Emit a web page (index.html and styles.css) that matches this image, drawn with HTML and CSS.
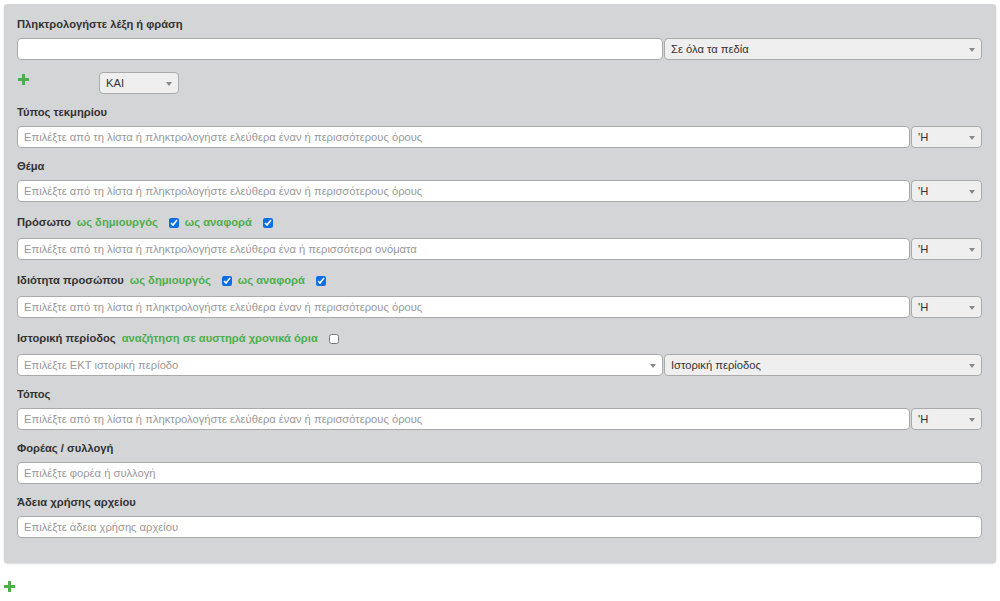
FILE: index.html
```html
<!DOCTYPE html>
<html>
<head lang="el">
    <meta charset="UTF-8">
    <title>Σύνθετη αναζήτηση</title>
    <link rel="stylesheet" href="styles.css">
</head>
<body>

<div class="search-panel">
    <div class="field">
        <div class="label">Πληκτρολογήστε λέξη ή φράση</div>
        <div class="row">
            <input class="text-input grow" type="text">
            <div class="select wide"><span>Σε όλα τα πεδία</span><i class="arrow"></i></div>
        </div>
    </div>

    <div class="op-row">
        <span class="plus">
            <svg width="11" height="11" viewBox="0 0 11 11"><path d="M4 0h3v4h4v3H7v4H4V7H0V4h4z" fill="#4cae4c"/></svg>
        </span>
        <div class="select op"><span>ΚΑΙ</span><i class="arrow"></i></div>
    </div>

    <div class="field">
        <div class="label">Τύπος τεκμηρίου</div>
        <div class="row">
            <div class="text-input grow placeholder">Επιλέξτε από τη λίστα ή πληκτρολογήστε ελεύθερα έναν ή περισσότερους όρους</div>
            <div class="select small"><span>'Η</span><i class="arrow"></i></div>
        </div>
    </div>

    <div class="field">
        <div class="label">Θέμα</div>
        <div class="row">
            <div class="text-input grow placeholder">Επιλέξτε από τη λίστα ή πληκτρολογήστε ελεύθερα έναν ή περισσότερους όρους</div>
            <div class="select small"><span>'Η</span><i class="arrow"></i></div>
        </div>
    </div>

    <div class="field">
        <div class="label tall">Πρόσωπο
            <span class="opt">ως δημιουργός</span><input type="checkbox" checked>
            <span class="opt">ως αναφορά</span><input type="checkbox" checked>
        </div>
        <div class="row">
            <div class="text-input grow placeholder">Επιλέξτε από τη λίστα ή πληκτρολογήστε ελεύθερα ένα ή περισσότερα ονόματα</div>
            <div class="select small"><span>'Η</span><i class="arrow"></i></div>
        </div>
    </div>

    <div class="field">
        <div class="label tall">Ιδιότητα προσώπου
            <span class="opt">ως δημιουργός</span><input type="checkbox" checked>
            <span class="opt">ως αναφορά</span><input type="checkbox" checked>
        </div>
        <div class="row">
            <div class="text-input grow placeholder">Επιλέξτε από τη λίστα ή πληκτρολογήστε ελεύθερα έναν ή περισσότερους όρους</div>
            <div class="select small"><span>'Η</span><i class="arrow"></i></div>
        </div>
    </div>

    <div class="field">
        <div class="label tall">Ιστορική περίοδος
            <span class="opt">αναζήτηση σε αυστηρά χρονικά όρια</span><input type="checkbox">
        </div>
        <div class="row">
            <div class="text-input grow placeholder period">Επιλέξτε ΕΚΤ ιστορική περίοδο<i class="arrow"></i></div>
            <div class="select wide"><span>Ιστορική περίοδος</span><i class="arrow"></i></div>
        </div>
    </div>

    <div class="field">
        <div class="label">Τόπος</div>
        <div class="row">
            <div class="text-input grow placeholder">Επιλέξτε από τη λίστα ή πληκτρολογήστε ελεύθερα έναν ή περισσότερους όρους</div>
            <div class="select small"><span>'Η</span><i class="arrow"></i></div>
        </div>
    </div>

    <div class="field">
        <div class="label">Φορέας / συλλογή</div>
        <div class="row">
            <div class="text-input grow placeholder">Επιλέξτε φορέα ή συλλογή</div>
        </div>
    </div>

    <div class="field">
        <div class="label">Άδεια χρήσης αρχείου</div>
        <div class="row">
            <div class="text-input grow placeholder">Επιλέξτε άδεια χρήσης αρχείου</div>
        </div>
    </div>
</div>

<div class="add-group">
    <svg width="11" height="11" viewBox="0 0 11 11"><path d="M4 0h3v4h4v3H7v4H4V7H0V4h4z" fill="#4cae4c"/></svg>
</div>

</body>
</html>
```

FILE: styles.css
```css
body{
    margin: 0;
    font-family: "Liberation Sans", Arial, sans-serif;
    font-size: 11.2px;
    color: #333;
    background: #fff;
}
.search-panel{
    margin: 4px;
    width: 965px;
    padding: 12px 14px 15px 13px;
    background: #d4d5d6;
    border-radius: 3px;
    box-shadow: 0 1px 2px rgba(0,0,0,0.15);
}
.field{
    margin-bottom: 10px;
}
.label{
    height: 17px;
    line-height: 17px;
    margin-bottom: 5px;
    font-weight: bold;
    display: flex;
    align-items: center;
}
.label.tall{
    height: 21px;
    line-height: 21px;
}
.label .opt{
    color: #4cae4c;
    margin-left: 6px;
}
.label input[type=checkbox]{
    width: 10px;
    height: 10px;
    margin: 0 0 0 11px;
    accent-color: #0b6fe0;
}
.row{
    display: flex;
    height: 22px;
}
.text-input{
    box-sizing: border-box;
    height: 22px;
    border: 1px solid #aaa;
    border-radius: 4px;
    background: #fff;
    font: inherit;
    padding: 0 6px;
    line-height: 20px;
    outline: none;
}
.grow{
    flex: 1;
    min-width: 0;
}
.placeholder{
    color: #999;
    white-space: nowrap;
    overflow: hidden;
}
.period{
    position: relative;
}
.select{
    box-sizing: border-box;
    position: relative;
    height: 22px;
    margin-left: 1px;
    border: 1px solid #aaa;
    border-radius: 4px;
    background: #efefef;
    line-height: 20px;
    padding-left: 6px;
    color: #333;
}
.select.wide{
    width: 318px;
}
.select.small{
    width: 71px;
}
.arrow{
    position: absolute;
    right: 6px;
    top: 9px;
    width: 0;
    height: 0;
    border-left: 3px solid transparent;
    border-right: 3px solid transparent;
    border-top: 4px solid #888;
}
.op-row{
    display: flex;
    align-items: center;
    height: 22px;
    margin: 12px 0 10px;
}
.plus{
    display: block;
    width: 81px;
    padding-left: 1px;
    height: 11px;
    margin-top: -7px;
}
.plus svg, .add-group svg{
    display: block;
}
.select.op{
    width: 80px;
    margin-left: 0;
}
.add-group{
    margin: 18px 0 0 4px;
}
```
